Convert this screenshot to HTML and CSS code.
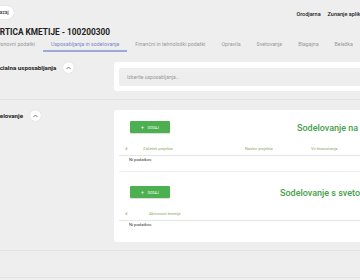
FILE: index.html
```html
<!DOCTYPE html>
<html lang="sl">
<head>
    <meta charset="UTF-8">
    <meta name="viewport" content="width=device-width, initial-scale=1.0">
    <title>Kartica kmetije</title>
    <link rel="stylesheet" href="styles.css">
</head>
<body>
    <div class="page">
        <div class="topbar">
            <button class="back-btn">Nazaj</button>
            <div class="top-links">
                <a href="#">Orodjarna</a>
                <a href="#">Zunanje aplikacije</a>
            </div>
        </div>
        <h1 class="farm-title">KARTICA KMETIJE - 100200300</h1>
        <div class="tabs">
            <div class="tab">Osnovni podatki</div>
            <div class="tab active">Usposabljanja in sodelovanje</div>
            <div class="tab">Finančni in tehnološki podatki</div>
            <div class="tab">Opravila</div>
            <div class="tab">Svetovanje</div>
            <div class="tab">Blagajna</div>
            <div class="tab">Beležka</div>
        </div>

        <div class="section">
            <div class="section-label">
                <span>Specialna usposabljanja</span>
                <span class="toggle">
                    <svg width="5" height="4" viewBox="0 0 10 6"><path d="M1 5 L5 1 L9 5" fill="none" stroke="#555" stroke-width="1.6"/></svg>
                </span>
            </div>
            <div class="card card-select">
                <div class="select-box">Izberite usposabljanja...</div>
            </div>
        </div>

        <div class="section">
            <div class="section-label">
                <span>Sodelovanje</span>
                <span class="toggle">
                    <svg width="5" height="4" viewBox="0 0 10 6"><path d="M1 5 L5 1 L9 5" fill="none" stroke="#555" stroke-width="1.6"/></svg>
                </span>
            </div>
            <div class="card card-tables">
                <div class="block">
                    <div class="block-head">
                        <button class="add-btn"><span class="plus">+</span> DODAJ</button>
                        <h2 class="block-title title-projects">Sodelovanje na projektih</h2>
                    </div>
                    <div class="grid grid-projects head-row">
                        <div>#</div>
                        <div>Začetek projekta</div>
                        <div>Naslov projekta</div>
                        <div>Vir financiranja</div>
                    </div>
                    <div class="empty-row">Ni podatkov.</div>
                </div>
                <div class="block">
                    <div class="block-head">
                        <button class="add-btn"><span class="plus">+</span> DODAJ</button>
                        <h2 class="block-title title-advisors">Sodelovanje s svetovalno službo</h2>
                    </div>
                    <div class="grid grid-advisors head-row">
                        <div>#</div>
                        <div>Aktivnosti kmetije</div>
                    </div>
                    <div class="empty-row">Ni podatkov.</div>
                </div>
            </div>
        </div>

        <div class="section section-empty"></div>
    </div>
</body>
</html>
```

FILE: styles.css
```css
body {
    margin: 0;
    padding: 0;
    width: 360px;
    height: 280px;
    overflow: hidden;
    background: #eeeeee;
    font-family: Roboto, "Liberation Sans", sans-serif;
    color: #222;
}
.page {
    margin-left: -11px;
    width: 400px;
}
.topbar {
    display: flex;
    align-items: center;
    justify-content: space-between;
    height: 24px;
    padding-right: 17px;
}
.back-btn {
    font-family: inherit;
    font-size: 5px;
    color: #222;
    background: #fff;
    border: none;
    border-radius: 7px;
    height: 13px;
    padding: 0 5px 0 7px;
    box-shadow: 0 0 1px rgba(0, 0, 0, 0.2);
}
.top-links {
    display: flex;
    gap: 7px;
    padding-top: 4px;
}
.top-links a {
    font-size: 5.5px;
    font-weight: 500;
    color: #222;
    text-decoration: none;
}
.farm-title {
    margin: 3px 0 0 0;
    font-size: 8.3px;
    line-height: 10px;
    font-weight: 700;
    color: #222;
}
.tabs {
    display: flex;
}
.tab {
    font-size: 5.3px;
    color: #999;
    padding: 4px 8px 3px 8px;
    line-height: 6px;
    border-bottom: 2px solid transparent;
    white-space: nowrap;
}
.tab.active {
    color: #7986cb;
    border-bottom-color: #9fa8da;
}
.section {
    display: grid;
    grid-template-columns: 125px 1fr;
    padding: 10px 0 8px 0;
    border-bottom: 1px solid #e2e2e2;
}
.section-label {
    display: flex;
    align-items: center;
    gap: 7px;
    height: 11px;
    font-size: 6.2px;
    font-weight: 700;
    color: #222;
}
.toggle {
    display: flex;
    align-items: center;
    justify-content: center;
    width: 11px;
    height: 11px;
    border-radius: 50%;
    background: #fff;
    box-shadow: 0 0 1px rgba(0, 0, 0, 0.2);
}
.card {
    background: #fff;
    border-radius: 3px;
}
.card-select {
    padding: 6px 5px 5px 5px;
}
.select-box {
    background: #eeeeee;
    border-radius: 2px;
    height: 18px;
    line-height: 18px;
    padding-left: 8px;
    font-size: 5px;
    color: #999;
}
.card-tables {
    padding: 5px 5px 14px 5px;
}
.block {
    padding-top: 6px;
}
.block + .block {
    border-top: 1px solid #eeeeee;
    margin-top: 8px;
    padding-top: 14px;
}
.block-head {
    display: flex;
    align-items: center;
}
.add-btn {
    margin-left: 11px;
    width: 40px;
    height: 12px;
    background: #4caf50;
    color: #fff;
    border: none;
    border-radius: 1px;
    font-family: inherit;
    font-size: 3.5px;
    padding: 0;
    box-shadow: 0 1px 1px rgba(0, 0, 0, 0.15);
}
.add-btn .plus {
    font-size: 5px;
    margin-right: 3px;
}
.block-title {
    margin: 2px 0 0 0;
    font-size: 9px;
    font-weight: 500;
    color: #43a047;
    white-space: nowrap;
}
.title-projects {
    margin-left: 127px;
}
.title-advisors {
    margin-left: 110px;
}
.grid {
    display: grid;
}
.grid-projects {
    grid-template-columns: 18px 102px 66px 1fr;
}
.grid-advisors {
    grid-template-columns: 24px 1fr;
}
.head-row {
    margin-top: 8px;
    height: 14px;
    align-items: center;
    border-bottom: 1px solid #e6e6e6;
    font-size: 4px;
    color: #8aa866;
}
.head-row div {
    padding-left: 6px;
    white-space: nowrap;
}
.empty-row {
    font-size: 4.2px;
    line-height: 7px;
    padding-left: 10px;
    color: #333;
}
.section-empty {
    height: 8px;
}
```
